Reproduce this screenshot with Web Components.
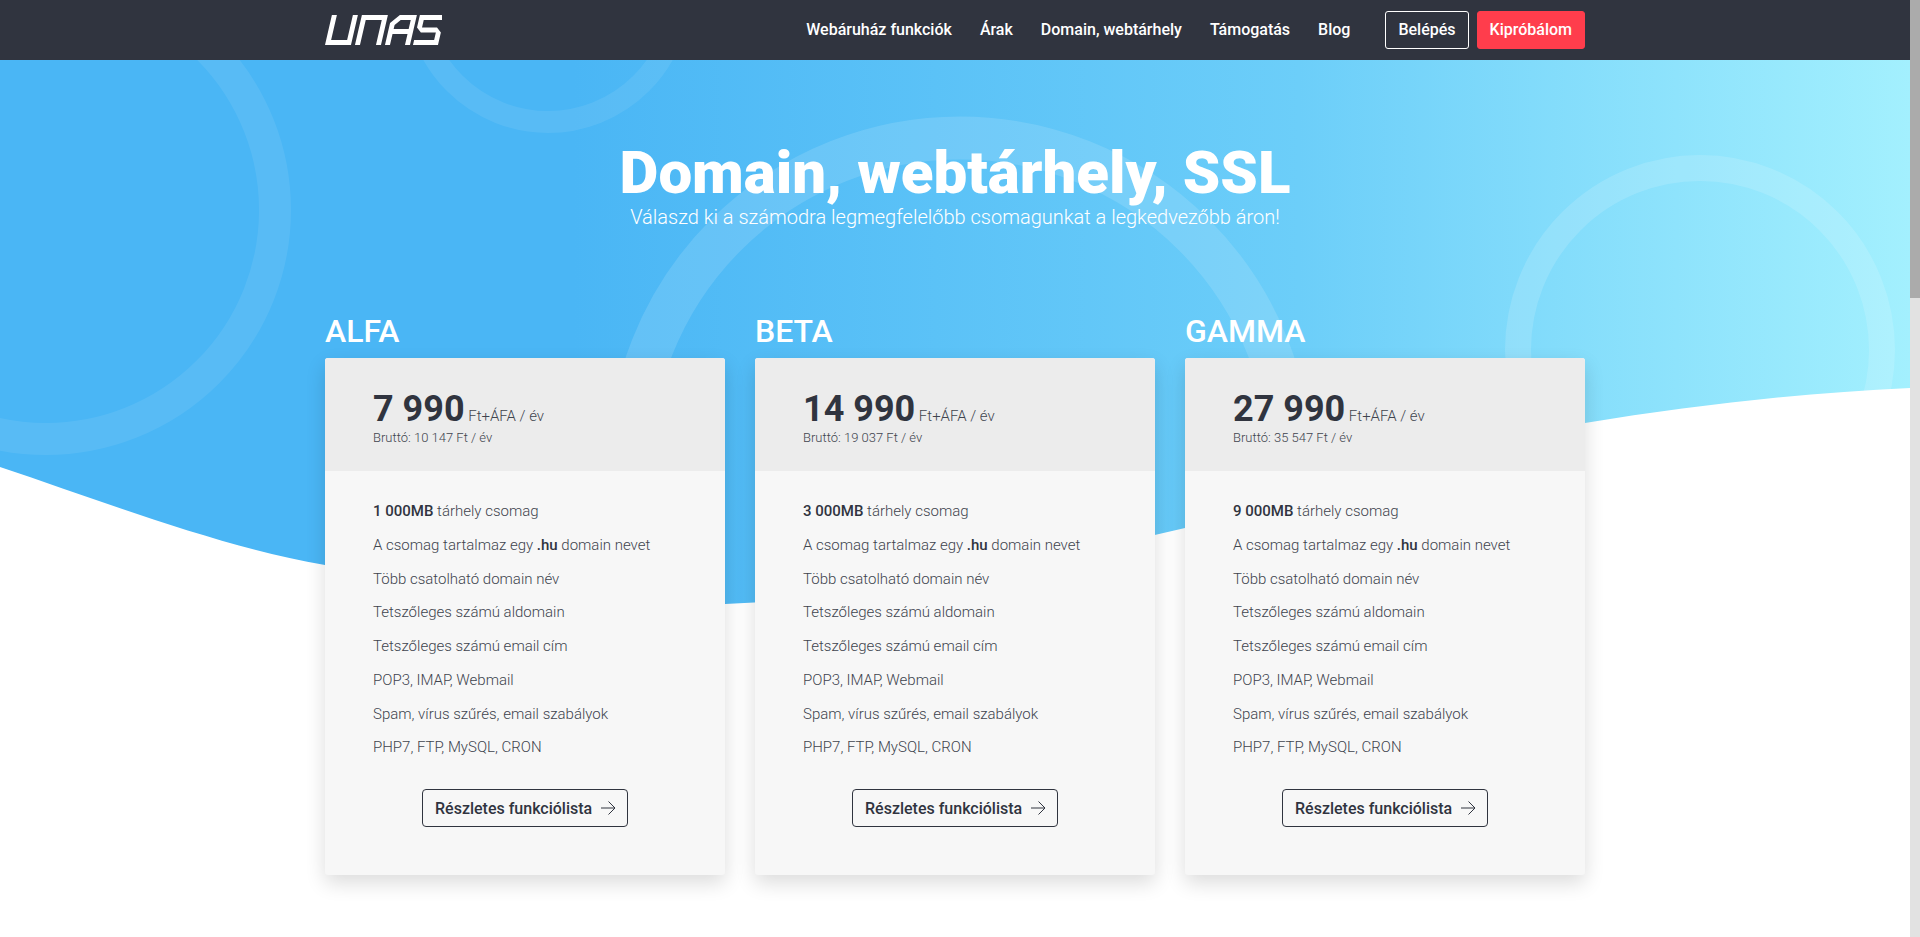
<!DOCTYPE html>
<html lang="hu">
<head>
<meta charset="utf-8">
<title>UNAS - Domain, webtárhely, SSL</title>
<style>
  html, body { margin: 0; height: 100%; overflow: hidden; }
  body { display: flex; font-family: Roboto, "Liberation Sans", sans-serif; color: #30343f; background: #fff; }
  b { font-weight: 500; color: #30343f; }
</style>
</head>
<body>
  <unas-page>
    <site-header>
      <nav-link>Webáruház funkciók</nav-link>
      <nav-link>Árak</nav-link>
      <nav-link>Domain, webtárhely</nav-link>
      <nav-link>Támogatás</nav-link>
      <nav-link>Blog</nav-link>
      <nav-button slot="actions">Belépés</nav-button>
      <nav-button slot="actions" kind="red">Kipróbálom</nav-button>
    </site-header>
    <hero-section heading="Domain, webtárhely, SSL" subtitle="Válaszd ki a számodra legmegfelelőbb csomagunkat a legkedvezőbb áron!">
      <price-card name="ALFA" price="7 990" gross="10 147">
        <feature-row><b>1 000MB</b> tárhely csomag</feature-row>
        <feature-row>A csomag tartalmaz egy <b>.hu</b> domain nevet</feature-row>
        <feature-row>Több csatolható domain név</feature-row>
        <feature-row>Tetszőleges számú aldomain</feature-row>
        <feature-row>Tetszőleges számú email cím</feature-row>
        <feature-row>POP3, IMAP, Webmail</feature-row>
        <feature-row>Spam, vírus szűrés, email szabályok</feature-row>
        <feature-row>PHP7, FTP, MySQL, CRON</feature-row>
      </price-card>
      <price-card name="BETA" price="14 990" gross="19 037">
        <feature-row><b>3 000MB</b> tárhely csomag</feature-row>
        <feature-row>A csomag tartalmaz egy <b>.hu</b> domain nevet</feature-row>
        <feature-row>Több csatolható domain név</feature-row>
        <feature-row>Tetszőleges számú aldomain</feature-row>
        <feature-row>Tetszőleges számú email cím</feature-row>
        <feature-row>POP3, IMAP, Webmail</feature-row>
        <feature-row>Spam, vírus szűrés, email szabályok</feature-row>
        <feature-row>PHP7, FTP, MySQL, CRON</feature-row>
      </price-card>
      <price-card name="GAMMA" price="27 990" gross="35 547">
        <feature-row><b>9 000MB</b> tárhely csomag</feature-row>
        <feature-row>A csomag tartalmaz egy <b>.hu</b> domain nevet</feature-row>
        <feature-row>Több csatolható domain név</feature-row>
        <feature-row>Tetszőleges számú aldomain</feature-row>
        <feature-row>Tetszőleges számú email cím</feature-row>
        <feature-row>POP3, IMAP, Webmail</feature-row>
        <feature-row>Spam, vírus szűrés, email szabályok</feature-row>
        <feature-row>PHP7, FTP, MySQL, CRON</feature-row>
      </price-card>
    </hero-section>
  </unas-page>
  <fake-scrollbar></fake-scrollbar>

<script>
class UnasPage extends HTMLElement {
  constructor () {
    super()
    this.attachShadow({ mode: 'open' }).innerHTML = /* html */ `
      <style>
        :host { display: flex; flex-direction: column; flex: 1; min-width: 0; height: 100%; overflow: hidden; }
      </style>
      <slot></slot>
    `
  }
}

class SiteHeader extends HTMLElement {
  constructor () {
    super()
    this.attachShadow({ mode: 'open' }).innerHTML = /* html */ `
      <style>
        :host { display: block; flex: none; height: 60px; background: #30343f; position: relative; z-index: 2; }
        .inner { width: 1260px; height: 100%; margin: 0 auto; display: flex; align-items: center; }
        svg { width: 117px; height: 30px; display: block; }
        nav { margin-left: auto; display: flex; align-items: center; gap: 28px; }
        .actions { margin-left: 35px; display: flex; gap: 8px; }
      </style>
      <div class="inner">
        <svg viewBox="0 0 117 30" role="img" aria-label="UNAS">
          <g transform="translate(6.9 0) skewX(-13)" fill="#fff" fill-rule="evenodd">
            <path d="M0 0H5V25H21V0H26V30H0Z"/>
            <path d="M30 30V0H56V30H51V5H35V30Z"/>
            <path d="M60 30V8L68 0H85V30H80V19H65V30ZM65 14H80V5H70L65 10Z"/>
            <path d="M88 30V25H108V17.5H93L88 12.5V0H113V5H93V12.5H108L113 17.5V30Z"/>
          </g>
        </svg>
        <nav><slot></slot></nav>
        <div class="actions"><slot name="actions"></slot></div>
      </div>
    `
  }
}

class NavLink extends HTMLElement {
  constructor () {
    super()
    this.attachShadow({ mode: 'open' }).innerHTML = /* html */ `
      <style>
        :host { display: block; color: #fff; font-size: 16px; font-weight: 500; line-height: 38px; white-space: nowrap; }
      </style>
      <slot></slot>
    `
  }
}

class NavButton extends HTMLElement {
  constructor () {
    super()
    this.attachShadow({ mode: 'open' }).innerHTML = /* html */ `
      <style>
        :host { display: block; box-sizing: border-box; height: 38px; padding: 0 12px; border: 1px solid #fff; border-radius: 3px; color: #fff; font-size: 16px; font-weight: 500; line-height: 36px; white-space: nowrap; }
        :host([kind="red"]) { background: #ff3d4c; border-color: #ff3d4c; }
      </style>
      <slot></slot>
    `
  }
}

class HeroSection extends HTMLElement {
  constructor () {
    super()
    this.attachShadow({ mode: 'open' }).innerHTML = /* html */ `
      <style>
        :host { display: block; flex: 1; position: relative; overflow: hidden; background: linear-gradient(90deg, #4ab6f5 0, #4ab6f5 30%, #6ccef9 68%, #a3f0fe 100%); }
        svg.back { position: absolute; left: 0; top: 0; width: 1910px; height: 877px; }
        .content { position: relative; width: 1260px; margin: 0 auto; padding-top: 83px; }
        h1 { margin: 0; color: #fff; font-size: 60px; font-weight: 900; line-height: 60px; text-align: center; }
        p { margin: 2px 0 0; color: #fff; font-size: 20px; font-weight: 300; line-height: 24px; text-align: center; }
        .cards { margin-top: 84px; display: grid; grid-template-columns: repeat(3, 400px); column-gap: 30px; }
      </style>
      <svg class="back" viewBox="0 60 1910 877" aria-hidden="true" fill="none" stroke="#fff">
        <circle cx="46" cy="210" r="229" stroke-width="32" stroke-opacity=".08"/>
        <circle cx="548" cy="-10" r="132" stroke-width="22" stroke-opacity=".08"/>
        <circle cx="960" cy="469" r="331" stroke-width="43" stroke-opacity=".13"/>
        <circle cx="1700" cy="350" r="182" stroke-width="26" stroke-opacity=".14"/>
        <path stroke="none" fill="#fff" d="M0 467C108 503 217 546 325 565C458 589 592 608 725 604C878 599 1032 564 1185 528C1318 497 1452 446 1585 423C1693 405 1802 393 1910 388V937H0Z"/>
      </svg>
      <div class="content">
        <h1 id="heading"></h1>
        <p id="subtitle"></p>
        <div class="cards"><slot></slot></div>
      </div>
    `
  }

  connectedCallback () {
    this.shadowRoot.getElementById('heading').textContent = this.getAttribute('heading')
    this.shadowRoot.getElementById('subtitle').textContent = this.getAttribute('subtitle')
  }
}

class PriceCard extends HTMLElement {
  constructor () {
    super()
    this.attachShadow({ mode: 'open' }).innerHTML = /* html */ `
      <style>
        :host { display: block; }
        h2 { margin: 0 0 9px; color: #fff; font-size: 32px; font-weight: 500; line-height: 36px; }
        .card { border-radius: 3px; background: #f7f7f7; box-shadow: 0 8px 20px rgba(0, 0, 0, .14); overflow: hidden; }
        .head { height: 113px; box-sizing: border-box; padding: 30px 48px 0; background: #ececec; font-weight: 300; color: #40444e; }
        .price { font-size: 15px; line-height: 42px; height: 42px; }
        .price strong { font-size: 36px; font-weight: 700; color: #30343f; }
        .gross { font-size: 13px; line-height: 16px; }
        .body { padding: 24px 48px 48px; font-size: 15px; font-weight: 300; color: #40444e; }
        .more { margin-top: 24px; display: flex; justify-content: center; color: #30343f; }
      </style>
      <h2 id="name"></h2>
      <div class="card">
        <div class="head">
          <div class="price"><strong id="price"></strong> Ft+ÁFA / év</div>
          <div class="gross">Bruttó: <span id="gross"></span> Ft / év</div>
        </div>
        <div class="body">
          <slot></slot>
          <div class="more"><more-button>Részletes funkciólista</more-button></div>
        </div>
      </div>
    `
  }

  connectedCallback () {
    this.shadowRoot.getElementById('name').textContent = this.getAttribute('name')
    this.shadowRoot.getElementById('price').textContent = this.getAttribute('price')
    this.shadowRoot.getElementById('gross').textContent = this.getAttribute('gross')
  }
}

class FeatureRow extends HTMLElement {
  constructor () {
    super()
    this.attachShadow({ mode: 'open' }).innerHTML = /* html */ `
      <style>
        :host { display: block; height: 33.75px; line-height: 33.75px; white-space: nowrap; }
      </style>
      <slot></slot>
    `
  }
}

class MoreButton extends HTMLElement {
  constructor () {
    super()
    this.attachShadow({ mode: 'open' }).innerHTML = /* html */ `
      <style>
        :host { display: flex; align-items: center; gap: 8px; box-sizing: border-box; width: 206px; height: 38px; padding: 0 12px; border: 1px solid #30343f; border-radius: 4px; font-size: 16px; font-weight: 500; white-space: nowrap; }
        svg { flex: none; width: 16px; height: 16px; }
      </style>
      <slot></slot>
      <svg viewBox="0 0 16 16" fill="none" stroke="#30343f" stroke-width="1"><path d="M1 8H15M8.5 1.5L15 8L8.5 14.5"/></svg>
    `
  }
}

class FakeScrollbar extends HTMLElement {
  constructor () {
    super()
    this.attachShadow({ mode: 'open' }).innerHTML = /* html */ `
      <style>
        :host { display: block; flex: none; width: 10px; height: 100%; background: #e2e2e2; }
        div { height: 298px; background: #ababab; }
      </style>
      <div></div>
    `
  }
}

customElements.define('unas-page', UnasPage)
customElements.define('site-header', SiteHeader)
customElements.define('nav-link', NavLink)
customElements.define('nav-button', NavButton)
customElements.define('hero-section', HeroSection)
customElements.define('more-button', MoreButton)
customElements.define('price-card', PriceCard)
customElements.define('feature-row', FeatureRow)
customElements.define('fake-scrollbar', FakeScrollbar)
</script>
</body>
</html>
